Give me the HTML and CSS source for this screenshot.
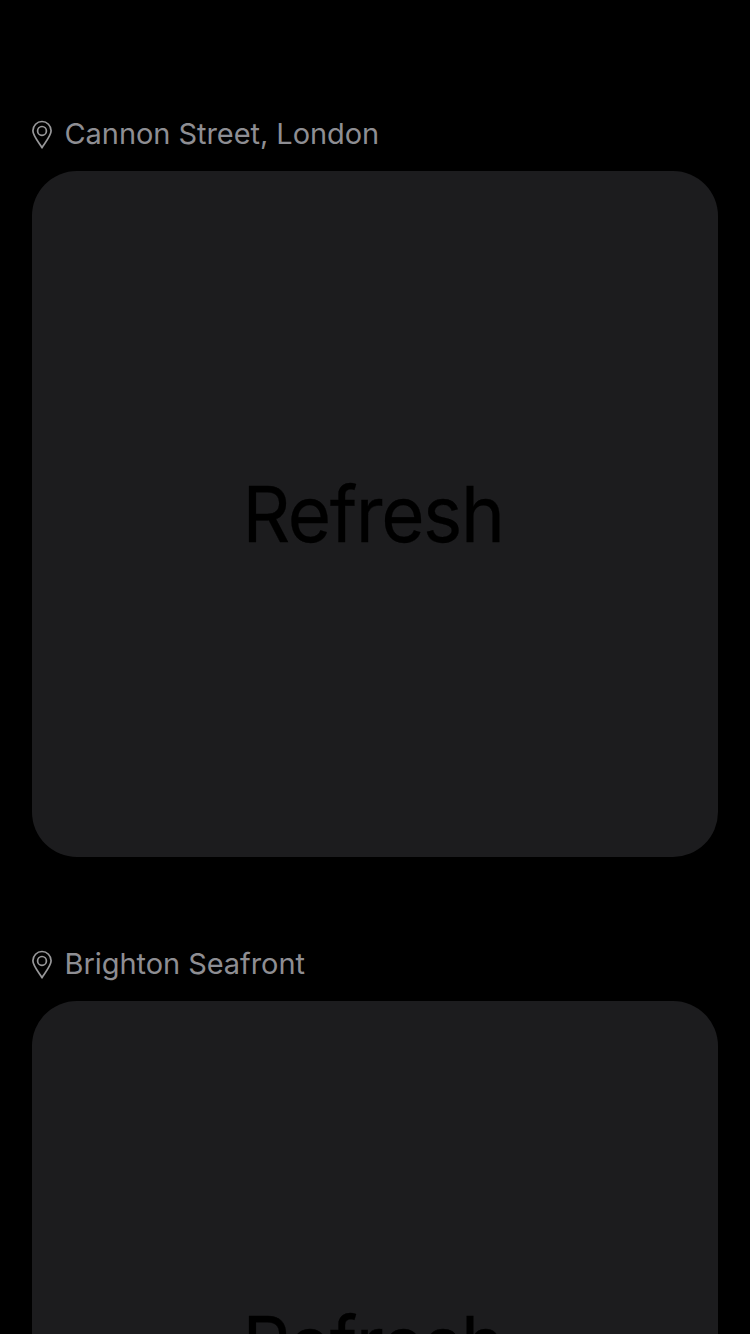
FILE: index.html
```html
<!DOCTYPE html>
<html lang="en">
<head>
<meta charset="utf-8">
<title>Locations</title>
<link rel="stylesheet" href="styles.css">
</head>
<body>
<main class="feed">
  <section class="location">
    <header class="location-header">
      <svg class="pin" viewBox="0 0 20 30" aria-hidden="true"><path d="M10 27.8C9.4 25.6 .9 16.3 .9 10.8a9.1 9.3 0 0 1 18.2 0C19.1 16.3 10.6 25.6 10 27.8Z"/><circle cx="10" cy="10.9" r="4.4"/></svg>
      <h2 class="location-name">Cannon Street, London</h2>
    </header>
    <button class="card"><span class="refresh">Refresh</span></button>
  </section>
  <section class="location">
    <header class="location-header">
      <svg class="pin" viewBox="0 0 20 30" aria-hidden="true"><path d="M10 27.8C9.4 25.6 .9 16.3 .9 10.8a9.1 9.3 0 0 1 18.2 0C19.1 16.3 10.6 25.6 10 27.8Z"/><circle cx="10" cy="10.9" r="4.4"/></svg>
      <h2 class="location-name">Brighton Seafront</h2>
    </header>
    <button class="card"><span class="refresh">Refresh</span></button>
  </section>
</main>
</body>
</html>
```
FILE: styles.css
```css
* { box-sizing: border-box; }
body {
  margin: 0;
  background: #000;
  font-family: Inter, "Liberation Sans", sans-serif;
}
.feed {
  height: 1334px;
  padding: 116px 32px 0;
  overflow: hidden;
  display: flex;
  flex-direction: column;
  gap: 89px;
}
.location {
  flex: none;
  display: flex;
  flex-direction: column;
  gap: 19px;
}
.location-header {
  height: 36px;
  display: flex;
  align-items: center;
  gap: 12.5px;
  color: #8e8e93;
}
.pin {
  width: 20px;
  height: 30px;
  margin-top: 2px;
  flex: none;
  fill: none;
  stroke: #98989a;
  stroke-width: 1.7;
  stroke-linejoin: round;
}
.location-name {
  margin: 0;
  font-size: 29px;
  font-weight: 400;
  line-height: 36px;
  letter-spacing: -0.06px;
  white-space: nowrap;
}
.card {
  width: 686px;
  height: 686px;
  padding: 0;
  border: 0;
  border-radius: 45px;
  background: #1c1c1e;
  color: #000;
  font-family: inherit;
  display: flex;
  align-items: center;
  justify-content: center;
}
.refresh {
  margin-right: 5px;
  font-size: 77.5px;
  line-height: 96px;
  letter-spacing: -1.5px;
  -webkit-text-stroke: 0.3px #000;
  transform: scaleX(0.96);
}
```
